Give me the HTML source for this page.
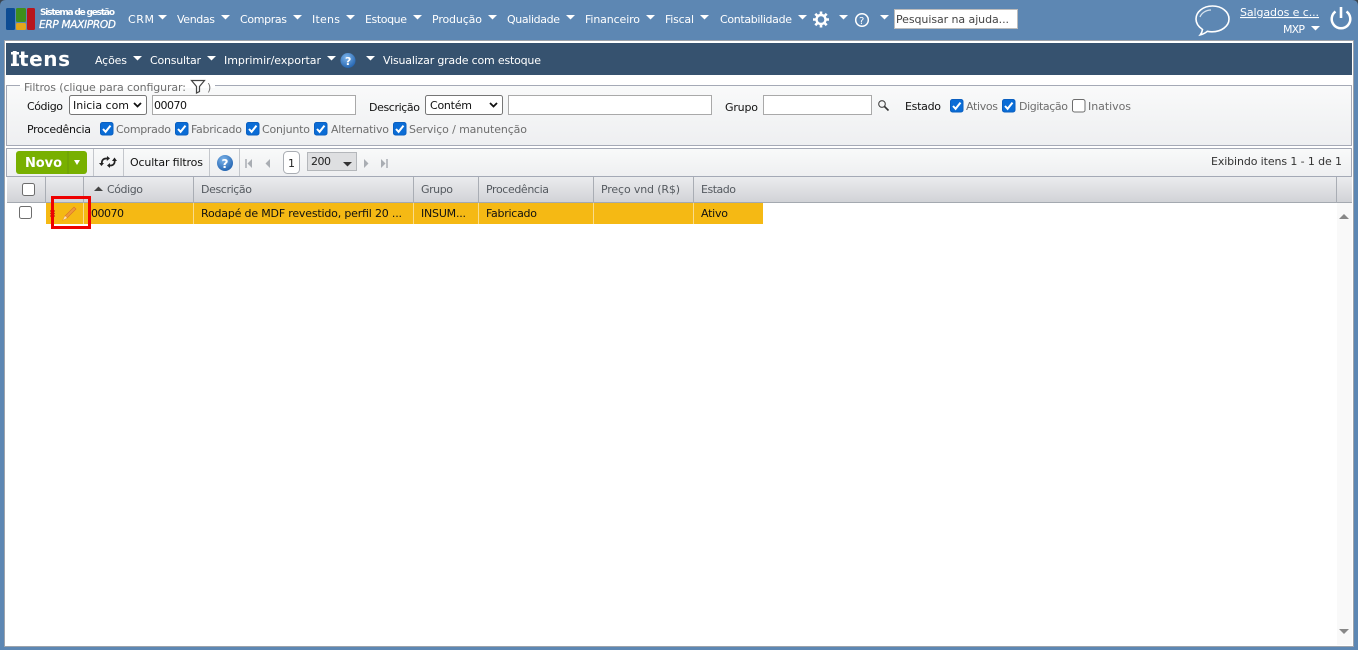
<!DOCTYPE html>
<html lang="pt-BR"><head><meta charset="utf-8"><title>Itens</title>
<style>
html,body{margin:0;padding:0;width:1358px;height:650px;overflow:hidden;background:#5d87b3}
svg{display:block}
text{font-family:"DejaVu Sans","Liberation Sans",sans-serif;font-size:11px;white-space:pre}
.n{fill:#fff}
.b{fill:#111}
.g{fill:#6e6e6e}
.h{fill:#555a60}
.d{fill:#222}
</style></head><body>
<svg width="1358" height="650" viewBox="0 0 1358 650" xmlns="http://www.w3.org/2000/svg">
<defs>
<linearGradient id="f" x1="0" y1="0" x2="0" y2="1"><stop offset="0" stop-color="#f9fafa"/><stop offset="1" stop-color="#eeeff1"/></linearGradient>
<linearGradient id="hd" x1="0" y1="0" x2="0" y2="1"><stop offset="0" stop-color="#ebecee"/><stop offset="1" stop-color="#d0d2d6"/></linearGradient>
<radialGradient id="q" cx=".4" cy=".3" r=".8"><stop offset="0" stop-color="#7db4ea"/><stop offset="1" stop-color="#1a5cab"/></radialGradient>
<path id="c" d="M0 0h9l-4.500 4.500z" fill="#fff"/>
<g id="cb"><rect x=".5" y=".5" width="12.500" height="12.500" rx="2" fill="#0a6cd6" stroke="#0a5fc0"/><path d="M3 7l2.600 2.800L10.500 3.600" fill="none" stroke="#fff" stroke-width="2"/></g>
<rect id="ub" x=".5" y=".5" width="12.500" height="12.500" rx="2" fill="#fff" stroke="#6d6d6d"/>
</defs>

<rect width="1358" height="650" fill="#5d87b3"/>
<path d="M0 0h6Q0 0 0 6zM1358 0h-6Q1358 0 1358 6z" fill="#3c4650"/>

<!-- logo -->
<rect x="6" y="8" width="9" height="22" rx="1.500" fill="#0d4c93"/>
<rect x="16" y="8" width="10" height="14" rx="1.500" fill="#3f8f1c"/>
<rect x="16" y="23" width="10" height="7" rx="1.500" fill="#e3a51c"/>
<rect x="27" y="8" width="8" height="22" rx="1.500" fill="#b8161c"/>
<text class="n" x="40" y="15" style="font-size:9px;font-weight:bold" textLength="75">Sistema de gestão</text>
<text class="n" x="39" y="28" style="font-size:10.500px;font-style:italic;stroke:#fff;stroke-width:.25" textLength="77">ERP MAXIPROD</text>

<!-- nav -->
<text class="n" x="128" y="23" textLength="26">CRM</text><use href="#c" x="158" y="15"/>
<text class="n" x="177" y="23" textLength="38">Vendas</text><use href="#c" x="221" y="15"/>
<text class="n" x="240" y="23" textLength="47">Compras</text><use href="#c" x="293" y="15"/>
<text class="n" x="312" y="23" textLength="28">Itens</text><use href="#c" x="346" y="15"/>
<text class="n" x="365" y="23" textLength="42">Estoque</text><use href="#c" x="413" y="15"/>
<text class="n" x="432" y="23" textLength="50">Produção</text><use href="#c" x="488" y="15"/>
<text class="n" x="507" y="23" textLength="53">Qualidade</text><use href="#c" x="566" y="15"/>
<text class="n" x="585" y="23" textLength="55">Financeiro</text><use href="#c" x="646" y="15"/>
<text class="n" x="665" y="23" textLength="29">Fiscal</text><use href="#c" x="700" y="15"/>
<text class="n" x="720" y="23" textLength="72">Contabilidade</text><use href="#c" x="798" y="15"/>
<!-- gear -->
<g transform="translate(821 19.500)" fill="none" stroke="#fff"><circle r="4.500" stroke-width="2.400"/><path d="M0-8V-5M0 5V8M-8 0H-5M5 0H8M-5.700-5.700L-3.500-3.500M3.500 3.500L5.700 5.700M-5.700 5.700L-3.500 3.500M3.500-3.500L5.700-5.700" stroke-width="2.600"/></g>
<use href="#c" x="839" y="15"/>
<circle cx="862" cy="20" r="6.300" fill="none" stroke="#fff" stroke-width="1.500"/>
<text class="n" x="859" y="24" style="font-size:10px" textLength="6">?</text>
<use href="#c" x="880" y="15"/>
<rect x="894.500" y="9.500" width="123" height="19" fill="#fff" stroke="#bcbcbc"/>
<text class="d" x="896" y="23" style="fill:#444" textLength="113">Pesquisar na ajuda...</text>
<!-- bubble -->
<path d="M1212.500 6C1203 6 1196 12 1196 19c0 4.500 2.800 8 6.500 10.500-.3 2-1 3.800-2.200 5.300 3-.7 5.300-2 7-3.500 1.500.3 3.100.5 4.700.5 9.500 0 17-5.700 17-12.800S1222 6 1212.500 6z" fill="#5d87b3" stroke="#fff" stroke-width="1.600"/>
<path d="M1200 17c1.500-4 6-7 11-7" fill="none" stroke="#d5e2ee" stroke-width="1.300"/>
<text class="n" x="1240" y="16" text-decoration="underline" textLength="79">Salgados e c...</text>
<text class="n" x="1283" y="33" textLength="22">MXP</text><use href="#c" x="1311" y="26"/>
<path d="M1335.500 11.500a9.300 9.300 0 1 0 11 0" fill="none" stroke="#fff" stroke-width="2.500"/>
<path d="M1341 7v11" stroke="#fff" stroke-width="2.600"/>

<!-- panel -->
<rect x="4" y="40" width="1350" height="607" fill="#9da3ab"/>
<rect x="5" y="41" width="1348" height="605" fill="#fff"/>
<rect x="6" y="43" width="1346" height="32" fill="#36526f"/>
<text x="11" y="66" style="font-size:20px;font-weight:bold;fill:#fff" textLength="59">Itens</text>
<path d="M11 52h8v2.500h-8zM11 63.500h8V66h-8z" fill="#fff"/>
<text class="n" x="95" y="64" textLength="32">Ações</text><use href="#c" x="133" y="56"/>
<text class="n" x="150" y="64" textLength="51">Consultar</text><use href="#c" x="207" y="56"/>
<text class="n" x="224" y="64" textLength="97">Imprimir/exportar</text><use href="#c" x="327" y="56"/>
<circle cx="348" cy="60.500" r="7.500" fill="url(#q)"/>
<text x="345" y="65" style="font-size:11px;font-weight:bold;fill:#fff" textLength="6.500">?</text>
<use href="#c" x="366" y="56"/>
<text class="n" x="383" y="64" textLength="158">Visualizar grade com estoque</text>

<!-- filters -->
<rect x="6.500" y="85.500" width="1345" height="60" fill="url(#f)" stroke="#a4a9b6"/>
<rect x="20" y="82" width="195" height="6" fill="#fff"/>
<rect x="7" y="76" width="1344" height="9" fill="#fff"/>
<text class="g" x="24" y="91" textLength="162">Filtros (clique para configurar:</text>
<path d="M191.500 80.500h13l-5 6v5l-3 1.500v-6.500z" fill="none" stroke="#444" stroke-width="1.200"/>
<text class="g" x="207" y="91" textLength="4">)</text>

<text class="b" x="27" y="110" textLength="36">Código</text>
<rect x="69.500" y="95.500" width="77" height="19" rx="2" fill="#fff" stroke="#767676"/>
<text class="b" x="73" y="109" textLength="56">Inicia com</text>
<path d="M134 103l3.500 3.500L141 103" fill="none" stroke="#111" stroke-width="1.800"/>
<rect x="152.500" y="95.500" width="203" height="19" fill="#fff" stroke="#a9a9a9"/>
<text class="b" x="154" y="109" textLength="33">00070</text>

<text class="b" x="369" y="111" textLength="51">Descrição</text>
<rect x="425.500" y="95.500" width="77" height="19" rx="2" fill="#fff" stroke="#767676"/>
<text class="b" x="430" y="109" textLength="42">Contém</text>
<path d="M490 103l3.500 3.500L497 103" fill="none" stroke="#111" stroke-width="1.800"/>
<rect x="508.500" y="95.500" width="203" height="19" fill="#fff" stroke="#a9a9a9"/>

<text class="b" x="725" y="111" textLength="33">Grupo</text>
<rect x="763.500" y="95.500" width="108" height="19" fill="#fff" stroke="#a9a9a9"/>
<circle cx="882" cy="104" r="3.300" fill="none" stroke="#444" stroke-width="1.100"/>
<path d="M884.500 106.500l4 4" stroke="#333" stroke-width="1.600"/>

<text class="b" x="905" y="110" textLength="36">Estado</text>
<use href="#cb" x="950" y="99"/><text class="g" x="966" y="110" textLength="32">Ativos</text>
<use href="#cb" x="1002" y="99"/><text class="g" x="1019" y="110" textLength="49">Digitação</text>
<use href="#ub" x="1072" y="99"/><text class="g" x="1088" y="110" textLength="43">Inativos</text>

<text class="b" x="27" y="133" textLength="64">Procedência</text>
<use href="#cb" x="100" y="122"/><text class="g" x="116" y="133" textLength="55">Comprado</text>
<use href="#cb" x="175" y="122"/><text class="g" x="191" y="133" textLength="51">Fabricado</text>
<use href="#cb" x="246" y="122"/><text class="g" x="262" y="133" textLength="48">Conjunto</text>
<use href="#cb" x="314" y="122"/><text class="g" x="331" y="133" textLength="58">Alternativo</text>
<use href="#cb" x="393" y="122"/><text class="g" x="409" y="133" textLength="118">Serviço / manutenção</text>

<!-- toolbar -->
<rect x="6.500" y="148.500" width="1345" height="28" fill="url(#f)" stroke="#a4a9b6"/>
<rect x="16" y="151" width="71" height="23" rx="3" fill="#78b000"/>
<path d="M68 151v23" stroke="#6a9a0a"/>
<text x="25" y="167" style="font-size:13px;font-weight:bold;fill:#fff" textLength="37">Novo</text>
<path d="M74 160h6l-3 5z" fill="#fff"/>
<path d="M93.500 149v27M123.500 149v27M209.500 149v27M239.500 149v27" stroke="#c4c7cc"/>
<!-- refresh arrows -->
<path d="M102 164c-.8-3 1-5.500 4-5.500h1.500" fill="none" stroke="#222" stroke-width="1.700"/>
<path d="M107 156l-.2 5 3.200-2.600z" fill="#222"/>
<path d="M104 163l-5 0 2.500 3z" fill="#222"/>
<path d="M114.500 160c.8 3-1 5.500-4 5.500H109" fill="none" stroke="#222" stroke-width="1.700"/>
<path d="M112 161h5l-2.500-3.500z" fill="#222"/>
<path d="M110 163v5l-3-2.500z" fill="#222"/>
<text class="b" x="130" y="166" textLength="73">Ocultar filtros</text>
<circle cx="225" cy="163" r="8" fill="url(#q)"/>
<text x="221.500" y="168" style="font-size:12px;font-weight:bold;fill:#fff" textLength="7">?</text>
<path d="M246 159v9" stroke="#a9adb3" stroke-width="1.500"/><path d="M252 159v9l-4.500-4.500z" fill="#a9adb3"/>
<path d="M270 159v9l-4.500-4.500z" fill="#a9adb3"/>
<rect x="283.500" y="151.500" width="16" height="22" rx="4" fill="#fff" stroke="#a9adb3"/>
<text class="d" x="288" y="167" textLength="6.500">1</text>
<rect x="307.500" y="152.500" width="49" height="18" fill="#dedfe1" stroke="#b4b7bb"/>
<text class="d" x="311" y="165" textLength="20">200</text>
<path d="M343 162h9l-4.500 4.500z" fill="#333"/>
<path d="M364 159v9l4.500-4.500z" fill="#a9adb3"/>
<path d="M381 159v9l4.500-4.500z" fill="#a9adb3"/><path d="M387 159v9" stroke="#a9adb3" stroke-width="1.500"/>
<text class="d" x="1211" y="165" style="fill:#333" textLength="131">Exibindo itens 1 - 1 de 1</text>

<!-- grid header -->
<rect x="7" y="177" width="1345" height="26" fill="url(#hd)"/>
<path d="M7 202.500H1352" stroke="#a4a9b0"/>
<path d="M45.500 177v26M83.500 177v26M193.500 177v26M413.500 177v26M478.500 177v26M593.500 177v26M693.500 177v26M1336.500 177v26" stroke="#a9adb4"/>
<rect x="22.500" y="183.500" width="12" height="12" rx="2" fill="#fff" stroke="#6d6d6d"/>
<path d="M94 191h9l-4.500-4.500z" fill="#444"/>
<text class="h" x="107" y="193" textLength="36">Código</text>
<text class="h" x="201" y="193" textLength="51">Descrição</text>
<text class="h" x="421" y="193" textLength="32">Grupo</text>
<text class="h" x="486" y="193" textLength="63">Procedência</text>
<text class="h" x="601" y="193" textLength="79">Preço vnd (R$)</text>
<text class="h" x="701" y="193" textLength="35">Estado</text>

<!-- scrollbar -->
<rect x="1337" y="203" width="15" height="442" fill="#f9f9f9"/>
<path d="M1339 219h10l-5-5z" fill="#888"/>
<path d="M1339 629h10l-5 5z" fill="#888"/>

<!-- row -->
<rect x="46" y="203" width="717" height="21" fill="#f5b914"/>
<path d="M83.500 203v21M193.500 203v21M413.500 203v21M478.500 203v21M593.500 203v21M693.500 203v21" stroke="#f9dc8c"/>
<rect x="19.500" y="206.500" width="12" height="12" rx="2" fill="#fff" stroke="#6d6d6d"/>
<path d="M50 211h5M50 213.500h5M50 216h5" stroke="#c0401a" stroke-width="1.500"/>
<path d="M63 220l2-4 9-9 2 2-9 9z" fill="#ee9a3a" stroke="#d8702a" stroke-width=".6"/>
<path d="M63 220l2-4 2 2z" fill="#fbe6b8"/>
<text class="b" x="91" y="217" textLength="33">00070</text>
<text class="b" x="201" y="217" textLength="201">Rodapé de MDF revestido, perfil 20 ...</text>
<text class="b" x="421" y="217" textLength="45">INSUM...</text>
<text class="b" x="486" y="217" textLength="51">Fabricado</text>
<text class="b" x="701" y="217" textLength="27">Ativo</text>

<!-- highlight -->
<rect x="52.500" y="197.500" width="37" height="30" fill="none" stroke="#ee0000" stroke-width="3"/>
</svg>
</body></html>
